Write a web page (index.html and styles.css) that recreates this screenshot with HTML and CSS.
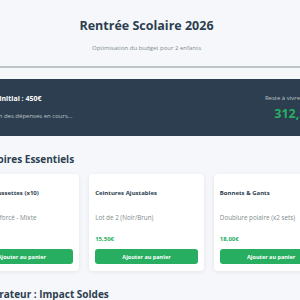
FILE: index.html
```html
<!DOCTYPE html>
<html lang="fr">
  <head>
    <meta charset="UTF-8" />
    <meta name="viewport" content="width=device-width, initial-scale=1.0" />
    <link rel="stylesheet" href="styles.css">
    <title>Rentrée Scolaire 2026</title>
  </head>
  <body>
    <header class="page__header">
      <h1 class="page__title">Rentrée Scolaire 2026</h1>
      <p class="page__subtitle">Optimisation du budget pour 2 enfants</p>
    </header>

    <div class="page">
      <section class="budget">
        <div class="budget__left">
          <h3 class="budget__initial">Budget Initial : 450€</h3>
          <p class="budget__status">Simulation des dépenses en cours...</p>
        </div>
        <div class="budget__right">
          <span class="budget__label">Reste à vivre (estimé)</span>
          <span class="budget__amount">312,50 €</span>
        </div>
      </section>

      <section class="shop">
        <h2 class="shop__title">Accessoires Essentiels</h2>
        <div class="shop__grid">
          <div class="card">
            <h4 class="card__name">Pack Chaussettes (x10)</h4>
            <p class="card__desc">Coton renforcé - Mixte</p>
            <span class="card__price">12,00€</span>
            <button class="card__btn">Ajouter au panier</button>
          </div>
          <div class="card">
            <h4 class="card__name">Ceintures Ajustables</h4>
            <p class="card__desc">Lot de 2 (Noir/Brun)</p>
            <span class="card__price">15,50€</span>
            <button class="card__btn">Ajouter au panier</button>
          </div>
          <div class="card">
            <h4 class="card__name">Bonnets &amp; Gants</h4>
            <p class="card__desc">Doublure polaire (x2 sets)</p>
            <span class="card__price">18,00€</span>
            <button class="card__btn">Ajouter au panier</button>
          </div>
        </div>
      </section>

      <section class="shop">
        <h2 class="shop__title shop__title--next">Comparateur : Impact Soldes</h2>
      </section>
    </div>
  </body>
</html>
```

FILE: styles.css
```css
* {
  margin: 0;
  padding: 0;
  box-sizing: border-box;
}

body {
  font-family: "Open Sans", "Noto Sans", sans-serif;
  background: #f5f7fa;
  color: #2c3e50;
  overflow: hidden;
}

.page__header {
  text-align: center;
  padding: 18px 7px 14px 0;
  border-bottom: 2px solid #bdc3c7;
}

.page__title {
  font-size: 12.5px;
  line-height: 16px;
  font-weight: 700;
  color: #2c3e50;
}

.page__subtitle {
  margin-top: 10px;
  font-size: 6px;
  line-height: 8px;
  color: #7f8c8d;
}

.page {
  display: flex;
  flex-direction: column;
  align-items: center;
  padding-right: 7px;
}

.budget {
  flex: none;
  width: 364px;
  height: 57px;
  margin-top: 11px;
  padding: 0 4.5px 0 8px;
  background: #2c3e50;
  color: #fff;
  display: flex;
  align-items: center;
  justify-content: space-between;
}

.budget__initial {
  font-size: 7px;
  line-height: 8px;
  font-weight: 700;
}

.budget__status {
  margin-top: 9px;
  font-size: 6px;
  line-height: 8px;
  color: #bdc3c7;
}

.budget__right {
  display: flex;
  flex-direction: column;
  align-items: flex-end;
}

.budget__label {
  font-size: 6px;
  line-height: 8px;
  color: #bdc3c7;
}

.budget__amount {
  margin-top: 5px;
  font-size: 12.5px;
  line-height: 14px;
  font-weight: 700;
  color: #27ae60;
}

.shop {
  flex: none;
  width: 364px;
}

.shop__title {
  margin-top: 16.5px;
  font-size: 10px;
  line-height: 12px;
  font-weight: 700;
  color: #2c3e50;
}

.shop__title--next {
  margin-top: 17px;
}

.shop__grid {
  margin-top: 9.5px;
  display: grid;
  grid-template-columns: repeat(3, 1fr);
  gap: 10px;
}

.card {
  display: flex;
  flex-direction: column;
  align-items: flex-start;
  height: 97px;
  padding: 15px 6px 7px;
  background: #fff;
  border-radius: 4px;
  box-shadow: 0 1px 4px rgba(0, 0, 0, 0.08);
}

.card__name {
  font-size: 6px;
  line-height: 8px;
  font-weight: 700;
  color: #2c3e50;
}

.card__desc {
  margin-top: 17px;
  font-size: 6.3px;
  line-height: 8px;
  color: #7f8c8d;
}

.card__price {
  margin-top: 13px;
  font-size: 6px;
  line-height: 8px;
  font-weight: 700;
  color: #27ae60;
}

.card__btn {
  margin-top: auto;
  align-self: stretch;
  height: 15px;
  border: none;
  border-radius: 3px;
  background: #27ae60;
  color: #fff;
  font-family: inherit;
  font-size: 5.5px;
  font-weight: 700;
}
```
